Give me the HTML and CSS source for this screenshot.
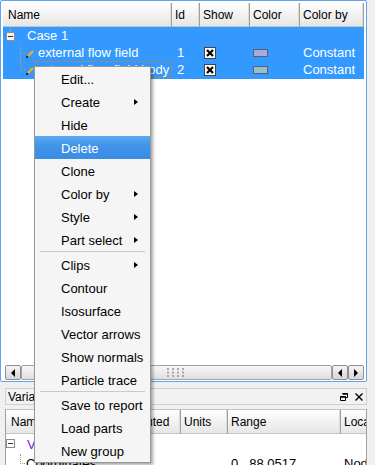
FILE: index.html
```html
<!DOCTYPE html>
<html lang="en">
<head>
    <meta charset="UTF-8">
    <meta name="viewport" content="width=device-width, initial-scale=1.0">
    <title>Parts</title>
    <link rel="stylesheet" href="styles.css">
</head>
<body>

    <!-- Parts tree -->
    <div class="parts">
        <div class="cols head">
            <div class="hcell name-h">Name</div>
            <div class="hcell">Id</div>
            <div class="hcell">Show</div>
            <div class="hcell">Color</div>
            <div class="hcell">Color by</div>
        </div>

        <div class="rows">
            <div class="sel">
                <div class="cols row">
                    <div class="cell name">
                        <svg class="expander" width="9" height="17" viewBox="0 0 9 17">
                            <path d="M4.5 0v5" stroke="#9aa8b8" stroke-dasharray="1 1"/>
                            <rect x=".5" y="5.5" width="8" height="8" fill="#f2f2f2" stroke="#8c8c8c"/>
                            <path d="M2 9.5h5" stroke="#333"/>
                        </svg>
                        <span>Case 1</span>
                    </div>
                    <div class="cell"></div>
                    <div class="cell"></div>
                    <div class="cell"></div>
                    <div class="cell"></div>
                </div>

                <div class="cols row">
                    <div class="cell name child">
                        <span class="guide"><i class="up"></i><i class="down"></i></span>
                        <svg class="pencil" width="8" height="8" viewBox="0 0 8 8">
                            <path d="M2 6L7 1" stroke="#f0b020" stroke-width="2.4"/>
                            <path d="M0 8L1.8 6.2" stroke="#222" stroke-width="2"/>
                        </svg>
                        <span class="label">external flow field</span>
                    </div>
                    <div class="cell id">1</div>
                    <div class="cell show">
                        <svg width="12" height="12" viewBox="0 0 12 12">
                            <rect x=".5" y=".5" width="11" height="11" fill="#fff" stroke="#444"/>
                            <path d="M3 3l6 6M9 3l-6 6" stroke="#000" stroke-width="2.2"/>
                        </svg>
                    </div>
                    <div class="cell color"><span class="swatch" style="background:#a9a9dc"></span></div>
                    <div class="cell">Constant</div>
                </div>

                <div class="cols row">
                    <div class="cell name child">
                        <span class="guide"><i class="up"></i><i></i></span>
                        <svg class="pencil" width="8" height="8" viewBox="0 0 8 8">
                            <path d="M2 6L7 1" stroke="#f0b020" stroke-width="2.4"/>
                            <path d="M0 8L1.8 6.2" stroke="#222" stroke-width="2"/>
                        </svg>
                        <span class="label focus">external flow field body</span>
                    </div>
                    <div class="cell id">2</div>
                    <div class="cell show">
                        <svg width="12" height="12" viewBox="0 0 12 12">
                            <rect x=".5" y=".5" width="11" height="11" fill="#fff" stroke="#444"/>
                            <path d="M3 3l6 6M9 3l-6 6" stroke="#000" stroke-width="2.2"/>
                        </svg>
                    </div>
                    <div class="cell color"><span class="swatch" style="background:#93c0c9"></span></div>
                    <div class="cell">Constant</div>
                </div>
            </div>
        </div>

        <div class="hscroll">
            <span class="sbtn"><i class="tri-left"></i></span>
            <span class="thumb">
                <svg width="20" height="9" viewBox="0 0 20 9">
                    <g fill="#a8a8a8">
                        <rect x="0" y="0" width="2" height="2"/><rect x="5" y="0" width="2" height="2"/>
                        <rect x="10" y="0" width="2" height="2"/><rect x="15" y="0" width="2" height="2"/>
                        <rect x="0" y="3.5" width="2" height="2"/><rect x="5" y="3.5" width="2" height="2"/>
                        <rect x="10" y="3.5" width="2" height="2"/><rect x="15" y="3.5" width="2" height="2"/>
                        <rect x="0" y="7" width="2" height="2"/><rect x="5" y="7" width="2" height="2"/>
                        <rect x="10" y="7" width="2" height="2"/><rect x="15" y="7" width="2" height="2"/>
                    </g>
                </svg>
            </span>
            <span class="sbtn"><i class="tri-left"></i></span>
            <span class="sbtn"><i class="tri-right"></i></span>
        </div>
    </div>

    <!-- Variables dock -->
    <div class="vars">
        <div class="dock-title">
            <span>Variables</span>
            <span class="dock-btns">
                <svg width="8" height="8" viewBox="0 0 8 8">
                    <path d="M2.5 .5h5v4h-2M.5 3.5h5v4h-5z" fill="none" stroke="#000"/>
                    <path d="M2.5 1h5M.5 4h5" stroke="#000" stroke-width="1.5"/>
                </svg>
                <svg width="8" height="8" viewBox="0 0 8 8">
                    <path d="M.5 .5l7 7M7.5 .5l-7 7" stroke="#000" stroke-width="1.4"/>
                </svg>
            </span>
        </div>
        <div class="vgrid">
            <div class="vcols vhead">
                <div class="hcell name-h">Name</div>
                <div class="hcell computed">Computed</div>
                <div class="hcell">Units</div>
                <div class="hcell">Range</div>
                <div class="hcell">Location</div>
            </div>
            <div class="vcols vrow">
                <div class="cell name">
                    <svg class="expander" width="9" height="17" viewBox="0 0 9 17">
                        <rect x=".5" y="3.5" width="8" height="8" fill="#fff" stroke="#8c8c8c"/>
                        <path d="M2 7.5h5" stroke="#333"/>
                    </svg>
                    <span class="group">Variables</span>
                </div>
                <div class="cell"></div>
                <div class="cell"></div>
                <div class="cell"></div>
                <div class="cell"></div>
            </div>
            <div class="vcols vrow">
                <div class="cell name child">
                    <span class="guide"><i class="up"></i><i></i></span>
                    <span class="label">Coordinates 1</span>
                </div>
                <div class="cell"></div>
                <div class="cell"></div>
                <div class="cell range"><span>0</span><span>88.0517</span></div>
                <div class="cell">Node</div>
            </div>
        </div>
    </div>

    <!-- Context menu -->
    <div class="ctx-menu">
        <div class="mi">Edit...</div>
        <div class="mi">Create <i class="arrow"></i></div>
        <div class="mi">Hide</div>
        <div class="mi active">Delete</div>
        <div class="mi">Clone</div>
        <div class="mi">Color by <i class="arrow"></i></div>
        <div class="mi">Style <i class="arrow"></i></div>
        <div class="mi">Part select <i class="arrow"></i></div>
        <div class="sep"></div>
        <div class="mi">Clips <i class="arrow"></i></div>
        <div class="mi">Contour</div>
        <div class="mi">Isosurface</div>
        <div class="mi">Vector arrows</div>
        <div class="mi">Show normals</div>
        <div class="mi">Particle trace</div>
        <div class="sep"></div>
        <div class="mi">Save to report</div>
        <div class="mi">Load parts</div>
        <div class="mi">New group</div>
    </div>

</body>
</html>
```

FILE: styles.css
```css
body {
    font-family: 'Liberation Sans', Tahoma, Arial, sans-serif;
    font-size: 13px;
    color: #000;
    background-color: #f0f0f0;
    margin: 0;
    width: 375px;
    height: 465px;
    overflow: hidden;
    position: relative;
}

/* ---------- parts tree ---------- */
.parts {
    width: 367px;
    height: 382px;
    box-sizing: border-box;
    border: 1px solid #5ea4ec;
    border-radius: 2px;
    background-color: #fff;
    padding: 2px 2px 0 2px;
    display: flex;
    flex-direction: column;
}
.cols {
    display: grid;
    grid-template-columns: 169px 28px 50px 50px 64px;
}
.head {
    height: 24px;
}
.hcell {
    font-size: 12px;
    display: flex;
    align-items: center;
    padding-left: 3px;
    background: linear-gradient(#ffffff, #f3f3f3 45%, #e6e6e6);
    border-right: 1px solid #9e9e9e;
    border-bottom: 1px solid #c4c4c4;
    box-shadow: inset -1px 0 #dcdcdc, inset 0 1px #fff;
    white-space: nowrap;
    overflow: hidden;
}
.hcell.name-h {
    padding-left: 5px;
}
.rows {
    flex: 1;
    background-color: #fff;
}
.sel {
    background-color: #3399ff;
    color: #fff;
    padding-bottom: 1px;
}
.row {
    height: 17px;
}
.cell {
    display: flex;
    align-items: center;
    padding-left: 3px;
    white-space: nowrap;
    overflow: hidden;
}
.cell.name {
    padding-left: 3px;
}
.expander {
    margin-right: 12px;
    flex-shrink: 0;
}
.child {
    align-items: stretch;
}
.guide {
    display: flex;
    flex-direction: column;
    width: 5px;
    margin-left: 14px;
    flex-shrink: 0;
}
.guide i {
    flex: 1;
}
.guide .up {
    border-left: 1px dotted #b49a7c;
    border-bottom: 1px dotted #b49a7c;
}
.guide .down {
    border-left: 1px dotted #b49a7c;
}
.pencil {
    align-self: center;
    margin: 2px 3px 0 1px;
    flex-shrink: 0;
}
.label {
    display: flex;
    align-items: center;
    padding-left: 1px;
}
.label.focus {
    flex: 1;
    outline: 1px dotted #e27a18;
    outline-offset: -1px;
    padding-left: 3px;
    margin-left: -3px;
}
.cell.id {
    padding-left: 5px;
}
.cell.show {
    padding-left: 4px;
}
.swatch {
    width: 13px;
    height: 6px;
    border: 1px solid #55607a;
}

/* horizontal scrollbar */
.hscroll {
    height: 17px;
    display: flex;
    padding: 1px 0 1px 2px;
    box-sizing: border-box;
}
.sbtn {
    width: 14px;
    border: 1px solid #8f8f8f;
    border-radius: 2px;
    background: linear-gradient(#f7f7f7, #e4e4e4 50%, #d6d6d6);
    display: flex;
    align-items: center;
    justify-content: center;
}
.thumb {
    flex: 1;
    border: 1px solid #a4a4a4;
    border-radius: 2px;
    background: linear-gradient(#f6f6f6, #ececec 50%, #dedede);
    display: flex;
    align-items: center;
    justify-content: center;
}
.tri-left {
    border-top: 4px solid transparent;
    border-bottom: 4px solid transparent;
    border-right: 4px solid #000;
}
.tri-right {
    border-top: 4px solid transparent;
    border-bottom: 4px solid transparent;
    border-left: 4px solid #000;
}

/* ---------- variables dock ---------- */
.vars {
    margin: 6px 0 0 5px;
    width: 362px;
}
.dock-title {
    height: 17px;
    box-sizing: border-box;
    border: 1px solid #cfcfcf;
    background-color: #f2f2f2;
    font-size: 12px;
    display: flex;
    align-items: center;
    justify-content: space-between;
    padding: 0 3px 0 2px;
}
.dock-btns {
    display: flex;
    gap: 7px;
    align-items: center;
}
.vgrid {
    margin-top: 4px;
    border-left: 1px solid #a0a0a0;
    border-right: 1px solid #a0a0a0;
    background-color: #fff;
    height: 60px;
    overflow: hidden;
}
.vcols {
    display: grid;
    grid-template-columns: 95px 80px 47px 113px 60px;
}
.vhead {
    height: 25px;
}
.vhead .hcell {
    font-size: 12px;
    border-top: 1px solid #c4c4c4;
}
.hcell.computed {
    padding-left: 13px;
}
.vrow {
    height: 18px;
    padding-top: 1px;
}
.vrow .cell.name {
    padding-left: 0;
}
.group {
    color: #6a22e8;
}
.range {
    gap: 11px;
}
.vrow .guide {
    margin-left: 14px;
}

/* ---------- context menu ---------- */
.ctx-menu {
    position: absolute;
    left: 34px;
    top: 66px;
    width: 117px;
    box-sizing: border-box;
    border: 1px solid #979797;
    background-color: #f5f5f5;
    box-shadow: 2px 2px 3px rgba(0, 0, 0, 0.35);
}
.mi {
    height: 23px;
    display: flex;
    align-items: center;
    justify-content: space-between;
    padding: 1px 12px 0 26px;
    box-sizing: border-box;
    white-space: nowrap;
}
.mi.active {
    background: linear-gradient(#5aa9f2, #3f92e8 45%, #3a8de4);
    color: #fff;
}
.arrow {
    border-top: 3.5px solid transparent;
    border-bottom: 3.5px solid transparent;
    border-left: 4px solid #000;
}
.sep {
    height: 2px;
    margin: 0 5px;
    border-top: 1px solid #c9c9c9;
    box-sizing: border-box;
}
```
